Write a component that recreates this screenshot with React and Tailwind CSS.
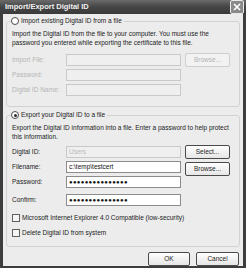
import React from "react";

const Radio = ({ checked }) => (
  <span className="w-[8px] h-[8px] rounded-full border border-[#4d4d4d] bg-white flex items-center justify-center shrink-0">
    {checked && <span className="w-[3px] h-[3px] rounded-full bg-[#2a2a2a]" />}
  </span>
);

const Checkbox = () => (
  <span className="w-[8px] h-[8px] border border-[#5f5f5f] bg-[#f4f4f4] shrink-0" />
);

const Button = ({ children, disabled, className = "" }) => (
  <div
    className={`h-[14px] rounded-[2px] border flex items-center justify-center text-[6.5px] ${
      disabled
        ? "border-[#cfcfcf] text-[#b3b3b3] bg-[#f2f2f2]"
        : "border-[#4a4a4a] text-[#1e1e1e] bg-gradient-to-b from-white to-[#e6e6e6]"
    } ${className}`}
  >
    {children}
  </div>
);

const Field = ({ label, value, disabled, dots, className = "", children }) => (
  <div className={`flex items-center h-[12px] ${className}`}>
    <div
      className={`w-[54px] text-[6.5px] ${disabled ? "text-[#b5b5b5]" : "text-[#222]"}`}
    >
      {label}
    </div>
    <div
      className={`w-[115px] h-[12px] border flex items-center px-[2px] text-[6.5px] ${
        disabled
          ? "border-[#c9c9c9] bg-[#efefef] text-[#b8b8b8]"
          : "border-[#8c8c8c] bg-white text-[#111]"
      }`}
    >
      {dots ? (
        <span className="tracking-[0.3px] text-[6px]">{"●".repeat(15)}</span>
      ) : (
        value
      )}
    </div>
    {children}
  </div>
);

export default function App() {
  return (
    <div className="w-[246px] h-[268px] bg-[#3d3d3d] flex flex-col font-['Liberation_Sans',Arial,sans-serif] overflow-hidden">
      {/* Title bar */}
      <div className="h-[19px] flex items-center justify-between pl-[5px] pr-[2px] bg-gradient-to-b from-[#6a6a6a] via-[#454545] to-[#3a3a3a]">
        <span className="text-[7.5px] font-bold text-[#f2f2f2]">
          Import/Export Digital ID
        </span>
        <div className="w-[14px] h-[14px] rounded-[2px] border border-[#e8e8e8] bg-[#8a8a8a] flex items-center justify-center">
          <svg width="8" height="8" viewBox="0 0 8 8">
            <path d="M1 1L7 7M7 1L1 7" stroke="#fff" strokeWidth="1.6" />
          </svg>
        </div>
      </div>

      {/* Body */}
      <div className="flex-1 mx-[3px] mb-[3px] bg-[#ececec] px-[3px] pt-[2px] flex flex-col">
        {/* Import group */}
        <fieldset className="border border-[#d2d2d2] rounded-[3px] px-[5px] pb-[10px]">
          <legend className="flex items-center gap-[2px] h-[10px] -ml-[1px] pr-[2px] text-[6.5px] text-[#222]">
            <Radio />
            <span>Import existing Digital ID from a file</span>
          </legend>
          <div className="mt-[3px] text-[6.5px] leading-[9px] text-[#222]">
            Import the Digital ID from the file to your computer. You must use the
            password you entered while exporting the certificate to this file.
          </div>
          <Field label="Import File:" disabled className="mt-[7px]">
            <Button disabled className="ml-[4px] w-[45px]">
              Browse...
            </Button>
          </Field>
          <Field label="Password:" disabled className="mt-[3px]" />
          <Field label="Digital ID Name:" disabled className="mt-[3px]" />
        </fieldset>

        {/* Export group */}
        <fieldset className="mt-[3px] border border-[#d2d2d2] rounded-[3px] px-[5px] pb-[8px]">
          <legend className="flex items-center gap-[2px] h-[10px] -ml-[1px] pr-[2px] text-[6.5px] text-[#222]">
            <Radio checked />
            <span>Export your Digital ID to a file</span>
          </legend>
          <div className="mt-[3px] text-[6.5px] leading-[9px] text-[#222]">
            Export the Digital ID information into a file. Enter a password to help
            protect this information.
          </div>
          <div className="mt-[4px] flex items-center h-[14px]">
            <div className="w-[54px] text-[6.5px] text-[#222]">Digital ID:</div>
            <div className="w-[115px] h-[12px] border border-[#c9c9c9] bg-[#efefef] flex items-center px-[2px] text-[6.5px] text-[#b8b8b8]">
              Users
            </div>
            <Button className="ml-[4px] w-[45px]">Select...</Button>
          </div>
          <div className="mt-[2px] flex items-start h-[15px]">
            <div className="w-[54px] h-[12px] flex items-center text-[6.5px] text-[#222]">
              Filename:
            </div>
            <div className="w-[115px] h-[12px] border border-[#8c8c8c] bg-white flex items-center px-[2px] text-[6.5px] text-[#111]">
              c:\temp\testcert
            </div>
            <Button className="ml-[4px] mt-[1px] w-[45px]">Browse...</Button>
          </div>
          <Field label="Password:" dots className="mt-[0px]" />
          <Field label="Confirm:" dots className="mt-[6px]" />
          <div className="mt-[7px] flex items-center gap-[2px] text-[6.5px] text-[#222]">
            <Checkbox />
            <span>Microsoft Internet Explorer 4.0 Compatible (low-security)</span>
          </div>
          <div className="mt-[5px] flex items-center gap-[2px] text-[6.5px] text-[#222]">
            <Checkbox />
            <span>Delete Digital ID from system</span>
          </div>
        </fieldset>

        {/* Buttons */}
        <div className="mt-[5px] flex justify-end gap-[6px] pr-[1px]">
          <Button className="w-[42px]">OK</Button>
          <Button className="w-[43px]">Cancel</Button>
        </div>
      </div>
    </div>
  );
}
